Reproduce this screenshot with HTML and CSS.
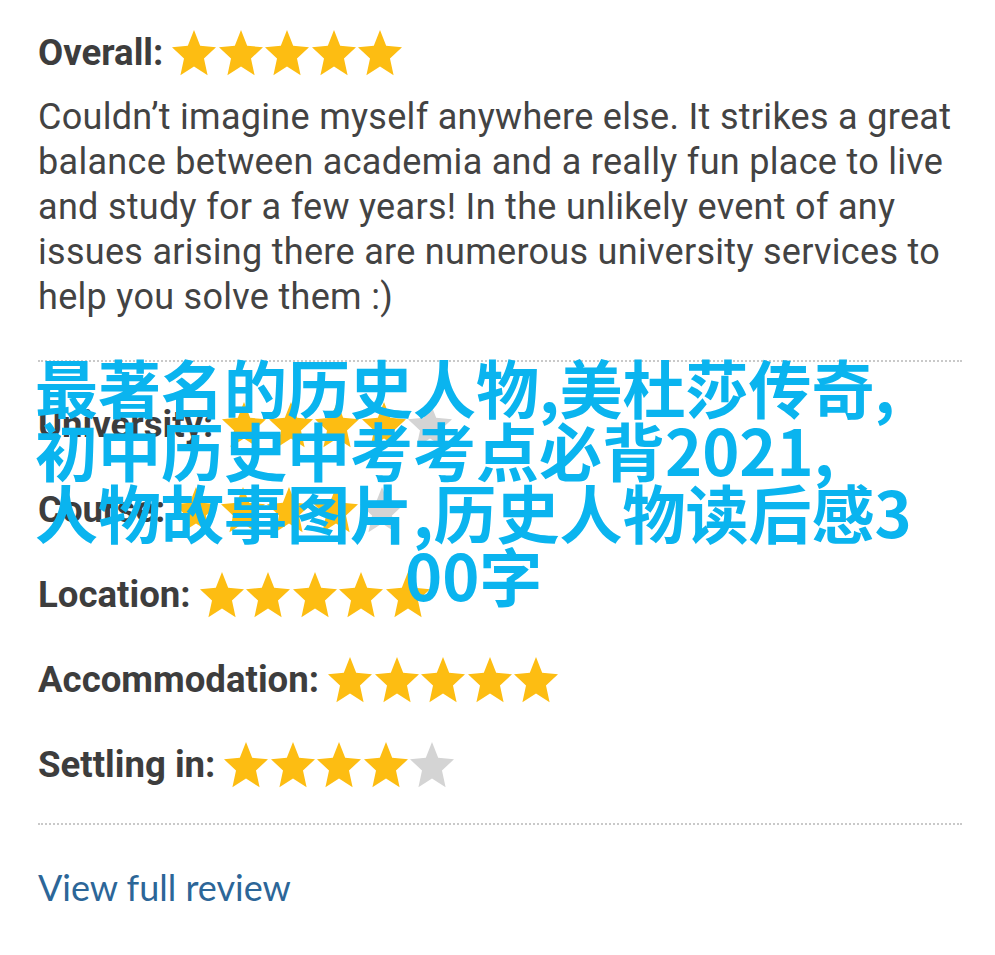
FILE: index.html
```html
<!DOCTYPE html>
<html lang="en">
<head>
<meta charset="utf-8">
<title>Review</title>
<link rel="stylesheet" href="styles.css">
</head>
<body>
<svg class="defs" width="0" height="0" aria-hidden="true">
  <symbol id="star" viewBox="2 2 20 19.3" preserveAspectRatio="none">
    <path d="M12 17.27L18.18 21l-1.64-7.03L22 9.24l-7.19-.61L12 2 9.19 8.63 2 9.24l5.46 4.73L5.82 21z"/>
  </symbol>
</svg>
<div class="review">
  <div class="row">
    <span class="label">Overall:</span>
    <span class="stars">
      <svg class="star on"><use href="#star"/></svg><svg class="star on"><use href="#star"/></svg><svg class="star on"><use href="#star"/></svg><svg class="star on"><use href="#star"/></svg><svg class="star on"><use href="#star"/></svg>
    </span>
  </div>
  <p class="text">Couldn’t imagine myself anywhere else. It strikes a great balance between academia and a really fun place to live and study for a few years! In the unlikely event of any issues arising there are numerous university services to help you solve them :)</p>
  <div class="ratings">
    <div class="row">
      <span class="label">University:</span>
      <span class="stars">
        <svg class="star on"><use href="#star"/></svg><svg class="star on"><use href="#star"/></svg><svg class="star on"><use href="#star"/></svg><svg class="star on"><use href="#star"/></svg><svg class="star off"><use href="#star"/></svg>
      </span>
    </div>
    <div class="row">
      <span class="label">Course:</span>
      <span class="stars">
        <svg class="star on"><use href="#star"/></svg><svg class="star on"><use href="#star"/></svg><svg class="star on"><use href="#star"/></svg><svg class="star on"><use href="#star"/></svg><svg class="star off"><use href="#star"/></svg>
      </span>
    </div>
    <div class="row">
      <span class="label">Location:</span>
      <span class="stars">
        <svg class="star on"><use href="#star"/></svg><svg class="star on"><use href="#star"/></svg><svg class="star on"><use href="#star"/></svg><svg class="star on"><use href="#star"/></svg><svg class="star on"><use href="#star"/></svg>
      </span>
    </div>
    <div class="row">
      <span class="label">Accommodation:</span>
      <span class="stars">
        <svg class="star on"><use href="#star"/></svg><svg class="star on"><use href="#star"/></svg><svg class="star on"><use href="#star"/></svg><svg class="star on"><use href="#star"/></svg><svg class="star on"><use href="#star"/></svg>
      </span>
    </div>
    <div class="row">
      <span class="label">Settling in:</span>
      <span class="stars">
        <svg class="star on"><use href="#star"/></svg><svg class="star on"><use href="#star"/></svg><svg class="star on"><use href="#star"/></svg><svg class="star on"><use href="#star"/></svg><svg class="star off"><use href="#star"/></svg>
      </span>
    </div>
  </div>
  <a class="more" href="#">View full review</a>
  <div class="overlay">
    <span class="line">最著名的历史人物,美杜莎传奇,</span>
    <span class="line">初中历史中考考点必背2021,</span>
    <span class="line">人物故事图片,历史人物读后感3</span>
    <span class="line last">00字</span>
  </div>
</div>
</body>
</html>
```
FILE: styles.css
```css
html, body {
  margin: 0;
  padding: 0;
  background: #ffffff;
}

.defs {
  position: absolute;
  width: 0;
  height: 0;
  overflow: hidden;
}

.review {
  position: relative;
  padding: 10px 33px 0 38px;
  font-family: Roboto, "Liberation Sans", sans-serif;
  color: #424242;
}

.row {
  display: flex;
  align-items: center;
  height: 85px;
}

.label {
  font-weight: 700;
  font-size: 36.6px;
  color: #3d3d3d;
  margin-right: 9px;
}

.stars {
  display: flex;
  gap: 2.5px;
}

.star {
  width: 44px;
  height: 46px;
  display: block;
}

.star.on {
  fill: #fdbd12;
}

.star.off {
  fill: #d4d4d4;
}

.text {
  margin: 0;
  font-size: 36px;
  letter-spacing: 0.3px;
  line-height: 45px;
  color: #434343;
}

.ratings {
  margin-top: 40px;
  border-top: 2px dotted #c9c9c9;
  border-bottom: 2px dotted #c9c9c9;
  padding: 20px 0 16px;
}

.more {
  display: block;
  margin-top: 40px;
  font-family: Lato, "Open Sans", sans-serif;
  font-size: 36px;
  color: #2c6698;
  text-decoration: none;
}

.overlay {
  position: absolute;
  top: 355px;
  left: 35px;
  font-family: "Noto Sans CJK SC", sans-serif;
  font-weight: 700;
  font-size: 63px;
  line-height: 62.5px;
  color: #0ab4ef;
}

.line {
  display: block;
  white-space: nowrap;
}

.line.last {
  padding-left: 370px;
}
```
